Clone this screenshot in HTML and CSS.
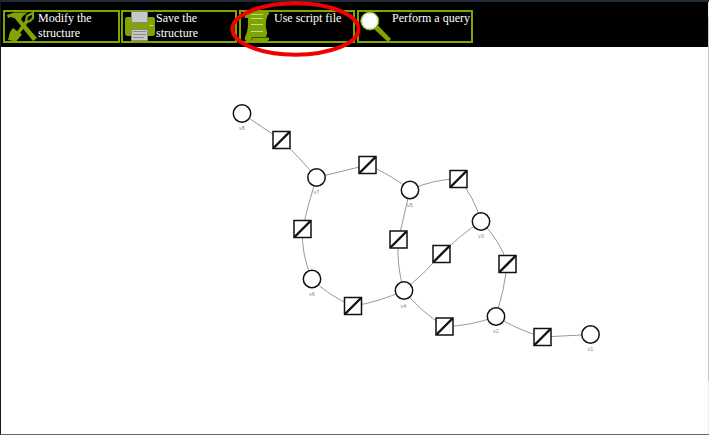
FILE: index.html
```html
<!DOCTYPE html>
<html lang="en">
<head>
<meta charset="utf-8">
<title>Structure viewer</title>
<link rel="stylesheet" href="styles.css">
</head>
<body>
<div class="window">
  <div class="content">
    <nav class="toolbar">
      <button class="tool">
        <svg class="icon" viewBox="0 0 32 32"><path d="M1 4 8 1.500h11l3-.5-5 4-2 3.500L31 27l-4 3L11 10 9 7.500 5 6 2 7Z"/><path class="shovel" d="M27 2 21 5l-1 6 4-1 3-3Z"/><path class="shaft" d="m21 10-9 12"/><path d="m7 17 9 6.500-6 7L2 29l2-8Z"/></svg>
        <span class="label">Modify the structure</span>
      </button>
      <button class="tool">
        <svg class="icon" viewBox="0 0 32 32"><path d="M3 6h5v5h16V6h5q2 0 2 3v13q0 3-3 3H4q-3 0-3-3V9q0-3 2-3Z"/><path class="paper" d="M7.500.5h16v11h-16zM7.500 18.500h16v11h-16z"/><path class="ink" d="M9 20.500h13M9 23.500h13M9 26.500h11"/><path class="shine" d="M25 14.500h4"/></svg>
        <span class="label">Save the structure</span>
      </button>
      <button class="tool">
        <svg class="icon" viewBox="0 0 32 32"><path d="M6 0h20q2 2 0 4-3 5-2 13 2 6 0 9h3v2q0 2-3 2H6q-4 0-3-4Q6 20 6 12V7H3Q2 3 6 0Z"/><path class="fold" d="M9 29q2-1 1-2.500h17"/><path class="lines" d="M9 3.500h12M9 7.500h12M9 13.500h12M9 20.500h12"/></svg>
        <span class="label">Use script file</span>
      </button>
      <button class="tool">
        <svg class="icon" viewBox="0 0 32 32"><path d="m14 18 4-3.500L31 28l-3 3Z"/><circle class="lens" cx="9.800" cy="10" r="9"/><circle class="glint" cx="9.800" cy="10" r="7.800"/></svg>
        <span class="label">Perform a query</span>
      </button>
    </nav>
    <svg class="graph" viewBox="1 47 707 387">
      <defs>
        <g id="relation"><path d="M-8.500-8.500h17v17h-17z"/><path class="slash" d="m-8 8 16-16"/></g>
        <circle id="vertex" r="8.700"/>
      </defs>
      <g class="edges">
        <path d="M242 113.500 281.500 140Q300 158 316.500 177.500"/>
        <path d="M316.500 177.500 367.500 165Q390 174 410 190"/>
        <path d="M316.500 177.500Q308 204 302.500 229 301 254 312 279"/>
        <path d="M312 279Q329 296 353 306 379 302 404 290.500"/>
        <path d="M410 190 398.500 239.500Q396 265 404 290.500"/>
        <path d="M410 190Q433 179 458.500 179 474 196 481 221.500"/>
        <path d="M481 221.500Q460 235 441.500 254 424 274 404 290.500"/>
        <path d="M481 221.500Q500 240 507.500 264 504 291 496 316.500"/>
        <path d="M404 290.500Q421 312 444.500 326.500 471 326 496 316.500"/>
        <path d="M496 316.500Q518 330 542.500 337L590.500 334.500"/>
      </g>
      <g class="shapes">
        <use href="#relation" x="281.500" y="140"/><use href="#relation" x="367.500" y="165"/>
        <use href="#relation" x="302.500" y="229"/><use href="#relation" x="353" y="306"/>
        <use href="#relation" x="398.500" y="239.500"/><use href="#relation" x="458.500" y="179"/>
        <use href="#relation" x="441.500" y="254"/><use href="#relation" x="507.500" y="264"/>
        <use href="#relation" x="444.500" y="326.500"/><use href="#relation" x="542.500" y="337"/>
        <use href="#vertex" x="242" y="113.500"/><use href="#vertex" x="316.500" y="177.500"/>
        <use href="#vertex" x="410" y="190"/><use href="#vertex" x="481" y="221.500"/>
        <use href="#vertex" x="312" y="279"/><use href="#vertex" x="404" y="290.500"/>
        <use href="#vertex" x="496" y="316.500"/><use href="#vertex" x="590.500" y="334.500"/>
      </g>
      <g class="names">
        <text x="242" y="130">v8</text><text x="316.500" y="194">v7</text>
        <text x="410" y="207">v5</text><text x="481" y="238">v3</text>
        <text x="312" y="296">v6</text><text x="403.500" y="308">v4</text>
        <text x="496" y="333">v2</text><text x="590.500" y="351">v1</text>
      </g>
    </svg>
  </div>
  <div class="scrollbar"><div class="thumb"></div></div>
</div>
<svg class="highlight" viewBox="0 0 132 58"><ellipse cx="65.500" cy="29" rx="63" ry="25.700"/></svg>
</body>
</html>
```

FILE: styles.css
```css
* { box-sizing: border-box; }
body { margin: 0; overflow: hidden; background: #fff; }
.window {
  display: flex;
  height: 435px;
  border-top: 2px solid #202d37;
  border-left: 1px solid #141b24;
  border-bottom: 1px solid #666;
}
.content { flex: 1; display: flex; flex-direction: column; min-width: 0; }
.toolbar {
  display: flex;
  gap: 2px;
  height: 45px;
  padding: 8px 0 0 2px;
  background: #000;
}
.tool {
  display: flex;
  align-items: flex-start;
  width: 116px;
  height: 33px;
  padding: 0;
  border: 2px solid #80a500;
  background: #000;
  color: #fff;
  font: 12px/15px "Liberation Serif", serif;
  text-align: left;
}
.tool:first-child { width: 117px; margin-right: -1px; }
.icon { flex: none; width: 32px; height: 32px; margin: -1px 0 0 1px; fill: #80a500; }
.label { flex: 1; margin-top: -1px; }
.tool:last-child .label { white-space: nowrap; }
.shovel { fill: none; stroke: #80a500; stroke-width: 2.200px; }
.shaft { stroke: #80a500; stroke-width: 3.500px; }
.paper { fill: #c8c8c8; stroke: #888; }
.ink { stroke: #888; }
.shine, .lines { stroke: #c4d88c; }
.fold { fill: none; stroke: #405500; }
.lens { fill: #fff; stroke: #80a500; stroke-width: 1px; }
.glint { fill: none; stroke: #d5dfae; stroke-width: 1px; }
.graph { display: block; width: 707px; height: 387px; }
.edges { fill: none; stroke: #999; stroke-width: 1px; }
.shapes { fill: #fff; stroke: #111; stroke-width: 1.500px; }
.slash { stroke-width: 2.400px; }
.names { fill: #888; font: 5.500px "Liberation Sans", sans-serif; text-anchor: middle; }
.scrollbar { width: 1px; padding-top: 15px; background: #eee; }
.thumb { height: 364px; background: #c5c5c5; }
.highlight { position: absolute; left: 230px; top: 0; width: 132px; height: 58px; fill: none; stroke: #f00000; stroke-width: 4px; }
```
